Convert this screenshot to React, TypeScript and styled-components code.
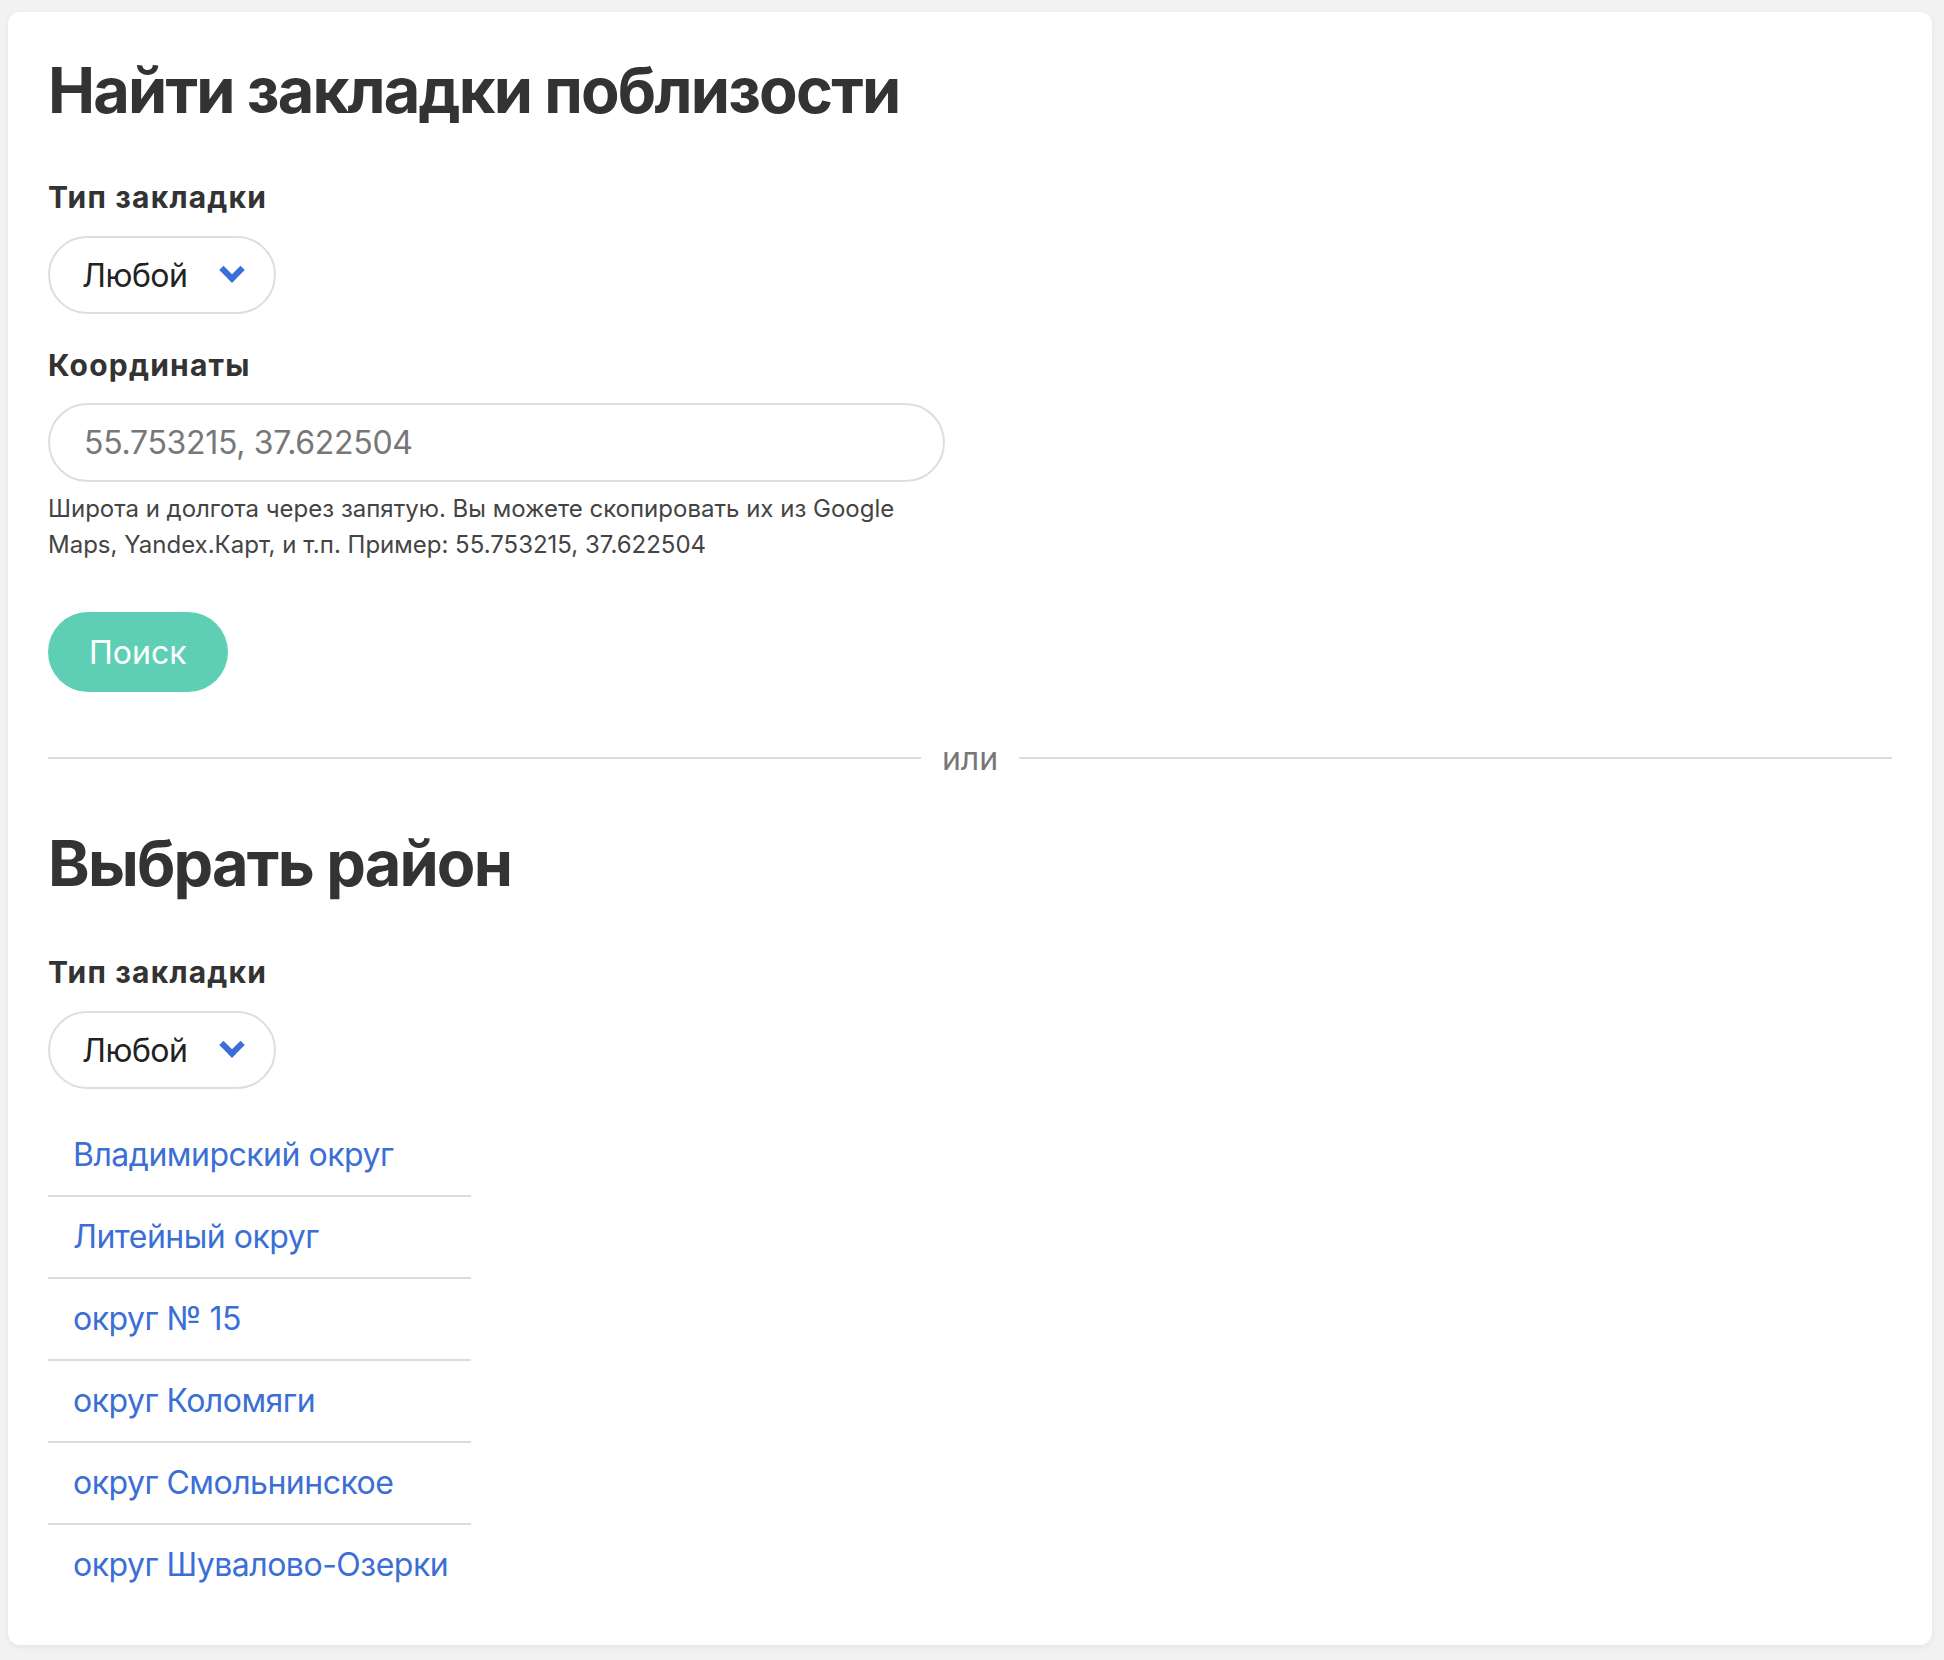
import styled, { createGlobalStyle } from "styled-components";

const districts = [
  "Владимирский округ",
  "Литейный округ",
  "округ № 15",
  "округ Коломяги",
  "округ Смольнинское",
  "округ Шувалово-Озерки",
];

const GlobalStyle = createGlobalStyle`
  * {
    box-sizing: border-box;
  }
  body {
    margin: 0;
    padding: 12px 12px 14px 8px;
    background: #f2f2f2;
    font-family: Inter, "Noto Sans", sans-serif;
    color: #333;
  }
`;

const Card = styled.main`
  background: #fff;
  border-radius: 12px;
  box-shadow: 0 2px 6px rgba(0, 0, 0, 0.06);
  padding: 40px;
  display: flex;
  flex-direction: column;
  align-items: flex-start;
`;

const Title = styled.h1<{ $top?: number }>`
  margin: ${({ $top }) => $top ?? 0}px 0 0;
  font-size: 63px;
  line-height: 77px;
  font-weight: 700;
  color: #333;
  letter-spacing: -1.8px;
`;

const Label = styled.label<{ $top: number }>`
  display: block;
  margin-top: ${({ $top }) => $top}px;
  font-size: 30px;
  line-height: 42px;
  font-weight: 700;
  letter-spacing: 1.2px;
  color: #333;
`;

const SelectBox = styled.div`
  margin-top: 18px;
  width: 228px;
  height: 78px;
  border: 2px solid #dedede;
  border-radius: 39px;
  display: flex;
  align-items: center;
  justify-content: space-between;
  padding: 0 33px 0 32px;
  font-size: 32px;
  letter-spacing: -0.5px;
  color: #222;
  background: #fff;
`;

const Chevron = styled.span`
  width: 18px;
  height: 18px;
  margin-top: -10px;
  border-right: 6px solid #3a6fd8;
  border-bottom: 6px solid #3a6fd8;
  transform: rotate(45deg);
`;

const CoordInput = styled.input`
  margin-top: 17px;
  width: 897px;
  height: 79px;
  border: 2px solid #dedede;
  border-radius: 40px;
  padding: 0 34px;
  font-family: inherit;
  font-size: 32px;
  letter-spacing: -0.3px;
  color: #333;
  outline: none;

  &::placeholder {
    color: #777;
  }
`;

const Help = styled.p`
  margin: 9px 0 0;
  width: 897px;
  font-size: 24px;
  line-height: 36px;
  color: #444;
`;

const SearchButton = styled.button`
  margin-top: 49px;
  height: 80px;
  padding: 0 41px;
  border: none;
  border-radius: 40px;
  background: #5ecfb4;
  color: #fff;
  font-family: inherit;
  font-size: 32px;
`;

const Divider = styled.div`
  margin-top: 42px;
  width: 100%;
  height: 48px;
  display: flex;
  align-items: center;
  gap: 21px;
  color: #777;
  font-size: 32px;

  &::before,
  &::after {
    content: "";
    flex: 1;
    height: 2px;
    background: #dcdcdc;
  }
`;

const DistrictList = styled.ul`
  list-style: none;
  margin: 26px 0 0;
  padding: 0;
  width: 423px;
`;

const DistrictItem = styled.li`
  padding: 16px 25px;
  border-bottom: 2px solid #dcdcdc;
  white-space: nowrap;

  &:last-child {
    border-bottom: none;
  }

  a {
    font-size: 32px;
    line-height: 48px;
    letter-spacing: -0.5px;
    color: #3b6fd5;
    text-decoration: none;
  }
`;

const TypeSelect = () => (
  <SelectBox>
    <span>Любой</span>
    <Chevron />
  </SelectBox>
);

export default function App() {
  return (
    <>
      <GlobalStyle />
      <Card>
        <Title>Найти закладки поблизости</Title>

        <Label $top={47}>Тип закладки</Label>
        <TypeSelect />

        <Label $top={30}>Координаты</Label>
        <CoordInput placeholder="55.753215, 37.622504" />
        <Help>
          Широта и долгота через запятую. Вы можете скопировать их из Google
          Maps, Yandex.Карт, и т.п. Пример: 55.753215, 37.622504
        </Help>

        <SearchButton type="button">Поиск</SearchButton>

        <Divider>или</Divider>

        <Title $top={43}>Выбрать район</Title>

        <Label $top={49}>Тип закладки</Label>
        <TypeSelect />

        <DistrictList>
          {districts.map((name) => (
            <DistrictItem key={name}>
              <a href="#">{name}</a>
            </DistrictItem>
          ))}
        </DistrictList>
      </Card>
    </>
  );
}
